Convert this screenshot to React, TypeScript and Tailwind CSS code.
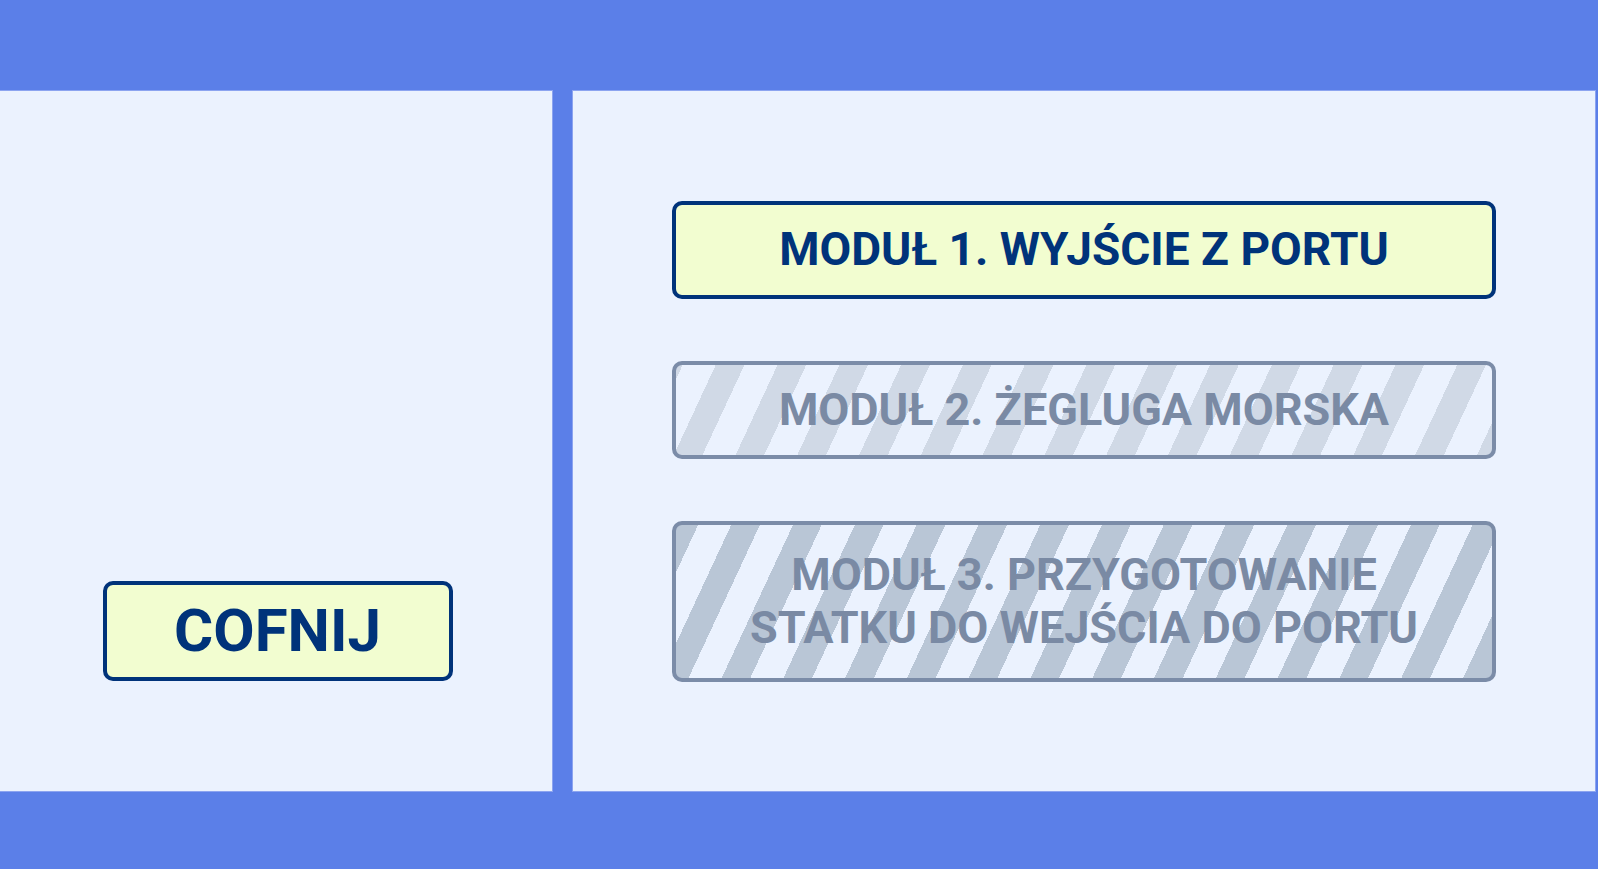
import React from "react";

const font = { fontFamily: "Roboto, 'Noto Sans', 'Liberation Sans', sans-serif" };

function ModuleButton({
  label,
  variant,
  tall,
}: {
  label: React.ReactNode;
  variant: "active" | "locked" | "lockedDark";
  tall?: boolean;
}) {
  const base =
    "w-[824px] rounded-[10px] border-[4px] flex items-center justify-center text-center font-bold leading-[53px]";
  if (variant === "active") {
    return (
      <div className={`${base} h-[98px] text-[46px] border-[#00337a] bg-[#f2fdd0] text-[#00337a]`}>
        {label}
      </div>
    );
  }
  // diagonal "locked" hatching
  const stripes =
    variant === "locked"
      ? "bg-[repeating-linear-gradient(115deg,#d0d9e6_0px,#d0d9e6_6px,#ebf2fe_6px,#ebf2fe_36px,#d0d9e6_36px,#d0d9e6_56px)]"
      : "bg-[repeating-linear-gradient(115deg,#b9c6d6_0px,#b9c6d6_20px,#ebf2fe_20px,#ebf2fe_50px,#b9c6d6_50px,#b9c6d6_56px)]";
  return (
    <div
      className={`${base} ${tall ? "h-[161px]" : "h-[98px]"} text-[45px] border-[#7b8ca8] text-[#7a8aa4] ${stripes}`}
    >
      {label}
    </div>
  );
}

export default function App() {
  return (
    <div
      className="w-full h-screen bg-[#5b7fe8] flex flex-col pt-[90px] pb-[77px] overflow-hidden"
      style={font}
    >
      <div className="flex h-[702px] gap-[19px] pr-[2px]">
        <aside className="w-[553px] h-full bg-[#ebf2fe] border-y border-r border-[#8ca4f0] flex flex-col items-center justify-end pb-[110px] pl-[3px]">
          <button className="w-[350px] h-[100px] rounded-[10px] border-[4px] border-[#00337a] bg-[#f2fdd0] text-[#00337a] font-bold text-[60px] leading-none">
            COFNIJ
          </button>
        </aside>
        <main className="flex-1 h-full bg-[#ebf2fe] border border-[#8ca4f0] flex flex-col items-center justify-center gap-[62px]">
          <ModuleButton label="MODUŁ 1. WYJŚCIE Z PORTU" variant="active" />
          <ModuleButton label="MODUŁ 2. ŻEGLUGA MORSKA" variant="locked" />
          <ModuleButton
            label={
              <span>
                MODUŁ 3. PRZYGOTOWANIE
                <br />
                STATKU DO WEJŚCIA DO PORTU
              </span>
            }
            variant="lockedDark"
            tall
          />
        </main>
      </div>
    </div>
  );
}
